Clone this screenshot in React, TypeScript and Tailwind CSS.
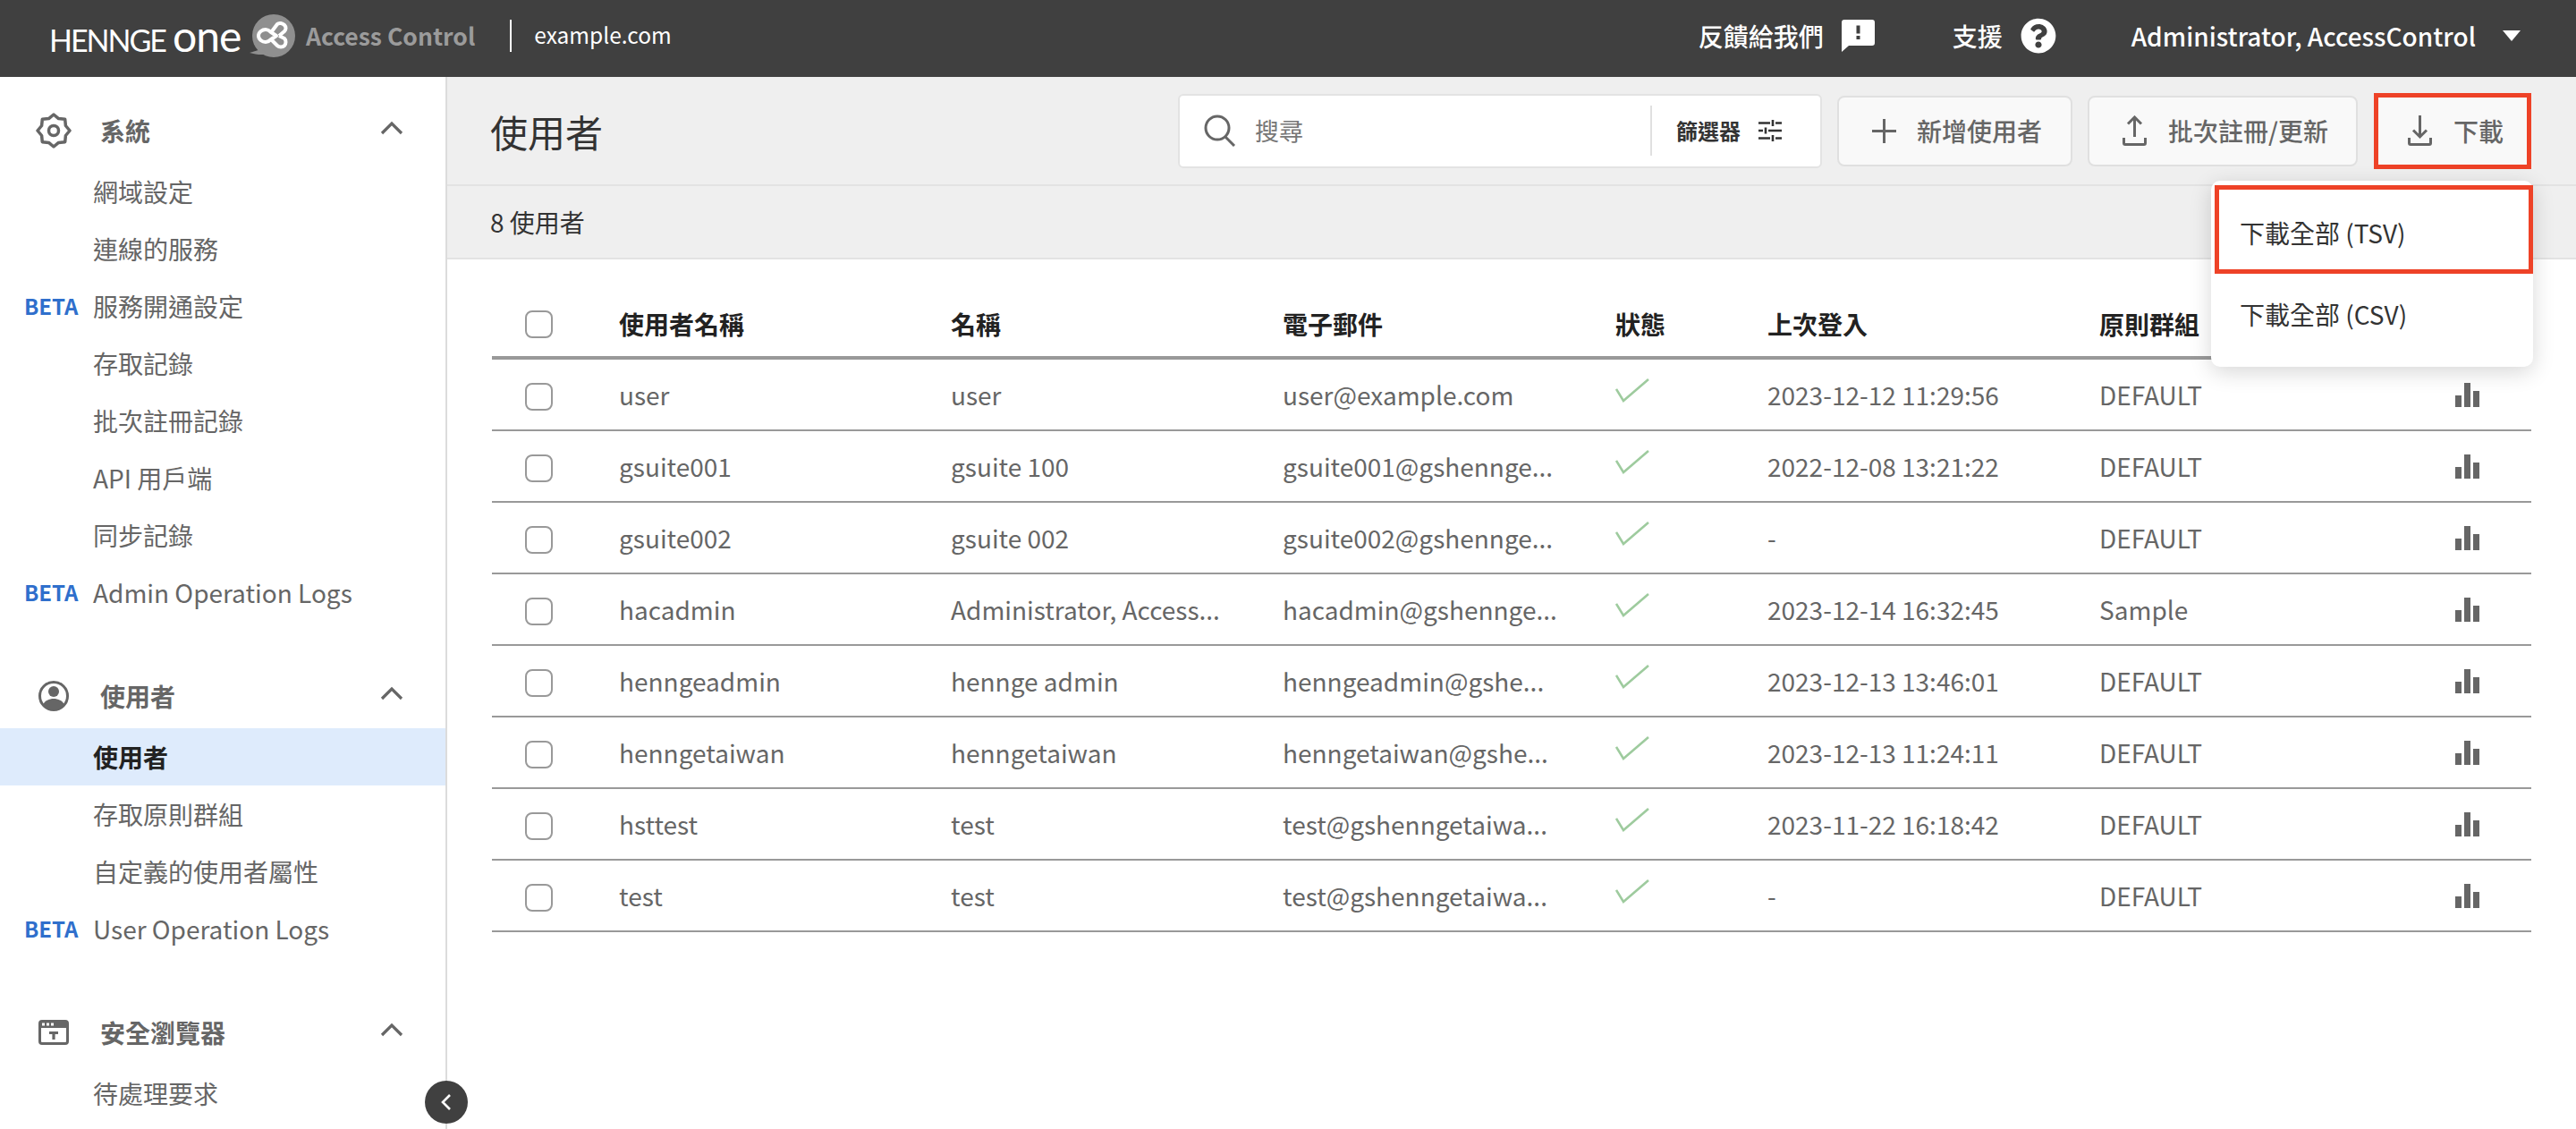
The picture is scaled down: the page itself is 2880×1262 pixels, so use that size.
import { FaQuestionCircle } from "react-icons/fa";

type NavSection = {
  title: string;
  icon: "gear" | "user" | "browser";
  items: { label: string; beta?: boolean; active?: boolean }[];
};

const sections: NavSection[] = [
  {
    title: "系統",
    icon: "gear",
    items: [
      { label: "網域設定" },
      { label: "連線的服務" },
      { label: "服務開通設定", beta: true },
      { label: "存取記錄" },
      { label: "批次註冊記錄" },
      { label: "API 用戶端" },
      { label: "同步記錄" },
      { label: "Admin Operation Logs", beta: true },
    ],
  },
  {
    title: "使用者",
    icon: "user",
    items: [
      { label: "使用者", active: true },
      { label: "存取原則群組" },
      { label: "自定義的使用者屬性" },
      { label: "User Operation Logs", beta: true },
    ],
  },
  {
    title: "安全瀏覽器",
    icon: "browser",
    items: [{ label: "待處理要求" }],
  },
];

const users = [
  ["user", "user", "user@example.com", "2023-12-12 11:29:56", "DEFAULT"],
  ["gsuite001", "gsuite 100", "gsuite001@gshennge...", "2022-12-08 13:21:22", "DEFAULT"],
  ["gsuite002", "gsuite 002", "gsuite002@gshennge...", "-", "DEFAULT"],
  ["hacadmin", "Administrator, Access...", "hacadmin@gshennge...", "2023-12-14 16:32:45", "Sample"],
  ["henngeadmin", "hennge admin", "henngeadmin@gshe...", "2023-12-13 13:46:01", "DEFAULT"],
  ["henngetaiwan", "henngetaiwan", "henngetaiwan@gshe...", "2023-12-13 11:24:11", "DEFAULT"],
  ["hsttest", "test", "test@gshenngetaiwa...", "2023-11-22 16:18:42", "DEFAULT"],
  ["test", "test", "test@gshenngetaiwa...", "-", "DEFAULT"],
];

const gridCols =
  "grid grid-cols-[142px_371px_371px_372px_170px_371px_398px_85px] items-center";

const SectionIcon = ({ icon }: { icon: NavSection["icon"] }) => {
  if (icon === "gear") {
    return (
      <svg width="40" height="40" viewBox="0 0 40 40" fill="none" stroke="#666" strokeWidth="3.5" strokeLinejoin="round">
        <polygon points="20,2 25.5,6.6 32.7,7.3 33.4,14.5 38,20 33.4,25.5 32.7,32.7 25.5,33.4 20,38 14.5,33.4 7.3,32.7 6.6,25.5 2,20 6.6,14.5 7.3,7.3 14.5,6.6" />
        <circle cx="20" cy="20" r="5.5" />
      </svg>
    );
  }
  if (icon === "user") {
    return (
      <svg width="40" height="40" viewBox="0 0 40 40">
        <circle cx="20" cy="20" r="15.5" fill="none" stroke="#666" strokeWidth="3" />
        <circle cx="20" cy="15" r="6" fill="#666" />
        <path d="M8 30c2-5 7-7 12-7s10 2 12 7c-3 4-7 6-12 6s-9-2-12-6z" fill="#666" />
      </svg>
    );
  }
  return (
    <svg width="40" height="40" viewBox="0 0 40 40">
      <rect x="4.5" y="7.5" width="31" height="25" rx="2.5" fill="none" stroke="#666" strokeWidth="3" />
      <rect x="4" y="7" width="32" height="8" fill="#666" />
      <rect x="7" y="9.5" width="3" height="3" fill="#fff" />
      <rect x="12" y="9.5" width="3" height="3" fill="#fff" />
      <rect x="17" y="9.5" width="3" height="3" fill="#fff" />
      <path d="M15 19h10v3h-3.4v6h-3.2v-6H15z" fill="#666" />
    </svg>
  );
};

const ChevronUp = () => (
  <svg width="28" height="18" viewBox="0 0 28 18" fill="none" stroke="#666" strokeWidth="3.2">
    <polyline points="3,15 14,4 25,15" />
  </svg>
);

const Logo = () => (
  <div className="flex items-center">
    <span className="ml-[55px] flex w-[223px] items-baseline font-['Lato',sans-serif] text-white">
      <span className="text-[34px] leading-none tracking-[-2px]">HENNGE</span>
      <span className="ml-[8px] text-[48px] leading-none tracking-[-1px]">one</span>
    </span>
    <svg width="54" height="52" viewBox="0 0 54 52" className="mt-[2px]">
      <circle cx="28" cy="25" r="24" fill="#8f8f8f" />
      <path d="M14 40 L1 44 C8 46 16 47 22 45z" fill="#8f8f8f" />
      <g fill="none" stroke="#fff" strokeWidth="4" strokeLinejoin="round">
        <path d="M19 18c-4 0-8 3-8 7s4 7 8 7c3 0 4-1 6-3l6-4-6-4c-2-2-3-3-6-3z" />
        <path d="M26 20l6-8c2-2 6-1 8 1s2 5 0 7l-6 5" />
        <path d="M26 30l6 6c2 2 6 2 8 0s2-6 0-8l-6-3" />
      </g>
    </svg>
    <span className="ml-[10px] text-[26.5px] font-bold text-[#9b9b9b]">Access Control</span>
    <span className="ml-[39px] h-[36px] w-[2px] bg-white" />
    <span className="ml-[25px] text-[24.5px] text-white">example.com</span>
  </div>
);

const Header = () => (
  <header className="flex h-[86px] items-center justify-between bg-[#404040] pb-[7px]">
    <Logo />
    <div className="flex items-center text-[28px] font-medium text-white">
      <span>反饋給我們</span>
      <svg width="37" height="37" viewBox="0 0 37 37" className="ml-[20px] mt-[1px]">
        <path d="M3 0h31a3 3 0 0 1 3 3v23a3 3 0 0 1-3 3H8l-8 7V3a3 3 0 0 1 3-3z" fill="#fff" />
        <rect x="16.5" y="6.5" width="4" height="9" fill="#404040" />
        <rect x="16.5" y="18" width="4" height="4" fill="#404040" />
      </svg>
      <span className="ml-[87px]">支援</span>
      <FaQuestionCircle className="ml-[20px] text-[40px] text-white" />
      <span className="ml-[84px]">Administrator, AccessControl</span>
      <svg width="20" height="12" viewBox="0 0 20 12" className="ml-[30px] mr-[62px]">
        <polygon points="0,0 20,0 10,12" fill="#fff" />
      </svg>
    </div>
  </header>
);

const Sidebar = () => (
  <aside className="relative w-[500px] shrink-0 border-r-2 border-[#dcdcdc] bg-white pt-[28px]">
    {sections.map((section, index) => (
      <div key={section.title} className={index > 0 ? "mt-[52px]" : ""}>
        <div className="mb-[4px] flex h-[64px] items-center pl-[40px] pr-[46px]">
          <SectionIcon icon={section.icon} />
          <span className="ml-[32px] text-[28px] font-bold text-[#666]">{section.title}</span>
          <span className="mb-[6px] ml-auto flex">
            <ChevronUp />
          </span>
        </div>
        {section.items.map((item) => (
          <div
            key={item.label}
            className={`relative flex h-[64px] items-center pl-[104px] text-[28px] ${
              item.active ? "bg-[#deebfc] font-bold text-[#222]" : "text-[#666]"
            }`}
          >
            {item.beta && (
              <span className="absolute left-[27px] text-[24px] font-bold text-[#2f6fcc]">BETA</span>
            )}
            {item.label}
          </div>
        ))}
      </div>
    ))}
    <button className="absolute right-[-25px] top-[1122px] flex h-[48px] w-[48px] items-center justify-center rounded-full bg-[#404040]">
      <svg width="14" height="22" viewBox="0 0 14 22" fill="none" stroke="#fff" strokeWidth="2.6">
        <polyline points="11,3 3,11 11,19" />
      </svg>
    </button>
  </aside>
);

const Toolbar = () => (
  <div className="flex h-[122px] items-center border-b-2 border-[#e3e3e3] pl-[48px] pr-[50px]">
    <h1 className="text-[42px] font-normal text-[#333]">使用者</h1>
    <div className="ml-auto flex h-[83px] w-[720px] items-center rounded-[6px] border-2 border-[#e3e3e3] bg-white">
      <svg width="36" height="36" viewBox="0 0 36 36" fill="none" stroke="#666" strokeWidth="3" className="ml-[27px]">
        <circle cx="15" cy="15" r="13" />
        <line x1="24" y1="25" x2="34" y2="35" />
      </svg>
      <span className="ml-[21px] text-[27px] text-[#777]">搜尋</span>
      <span className="ml-[388px] h-[56px] w-[2px] bg-[#e0e0e0]" />
      <span className="ml-[27px] text-[24px] font-bold text-[#333]">篩選器</span>
      <svg width="26" height="24" viewBox="0 0 26 24" stroke="#333" strokeWidth="2.6" className="ml-[20px]">
        <path d="M0 3.5h13M19 3.5h7M16 0v7M0 12h5M11 12h15M8 8.5v7M0 20.5h13M19 20.5h7M16 17v7" />
      </svg>
    </div>
    <button className="ml-[17px] flex h-[79px] w-[263px] items-center rounded-[8px] border-2 border-[#e0e0e0] bg-[#f9f9f9] pl-[37px] text-[28px] font-medium text-[#666]">
      <svg width="27" height="27" viewBox="0 0 27 27" stroke="#666" strokeWidth="3">
        <path d="M13.5 0v27M0 13.5h27" />
      </svg>
      <span className="ml-[23px]">新增使用者</span>
    </button>
    <button className="ml-[17px] flex h-[79px] w-[302px] items-center rounded-[8px] border-2 border-[#e0e0e0] bg-[#f9f9f9] pl-[37px] text-[28px] font-medium text-[#666]">
      <svg width="27" height="34" viewBox="0 0 27 34" fill="none" stroke="#666" strokeWidth="3">
        <path d="M13.5 2v22M6 9.5l7.5-7.5L21 9.5M1.5 25v6a1.5 1.5 0 0 0 1.5 1.5h21a1.5 1.5 0 0 0 1.5-1.5v-6" />
      </svg>
      <span className="ml-[24px]">批次註冊/更新</span>
    </button>
    <button className="ml-[18px] flex h-[85px] w-[176px] items-center border-[5px] border-[#ee4227] bg-[#f9f9f9] pl-[33px] text-[28px] font-medium text-[#666]">
      <svg width="27" height="34" viewBox="0 0 27 34" fill="none" stroke="#666" strokeWidth="3">
        <path d="M13.5 0v24M6 16.5l7.5 7.5 7.5-7.5M1.5 25v6a1.5 1.5 0 0 0 1.5 1.5h21a1.5 1.5 0 0 0 1.5-1.5v-6" />
      </svg>
      <span className="ml-[24px]">下載</span>
    </button>
  </div>
);

const UserRow = ({ user }: { user: string[] }) => (
  <div className={`${gridCols} h-[80px] border-b-2 border-[#999] text-[28px] text-[#666]`}>
    <span className="ml-[37px] mt-[5px] block h-[31px] w-[31px] rounded-[8px] border-2 border-[#999] bg-white" />
    <span>{user[0]}</span>
    <span>{user[1]}</span>
    <span>{user[2]}</span>
    <svg width="38" height="28" viewBox="0 0 38 28" fill="none" stroke="#9ecb9e" strokeWidth="2.6" className="mb-[10px]">
      <polyline points="1,13 9,26 37,2" />
    </svg>
    <span>{user[3]}</span>
    <span>{user[4]}</span>
    <svg width="27" height="27" viewBox="0 0 27 27" fill="#666">
      <rect x="0" y="14" width="7" height="13" />
      <rect x="10" y="0" width="7" height="27" />
      <rect x="20" y="9" width="7" height="18" />
    </svg>
  </div>
);

const UserTable = () => (
  <div className="px-[50px] pt-[40px]">
    <div className={`${gridCols} h-[72px] border-b-4 border-[#999] pb-[4px] text-[28px] font-bold text-[#222]`}>
      <span className="ml-[37px] block h-[31px] w-[31px] rounded-[8px] border-2 border-[#999] bg-white" />
      <span>使用者名稱</span>
      <span>名稱</span>
      <span>電子郵件</span>
      <span>狀態</span>
      <span>上次登入</span>
      <span>原則群組</span>
      <span />
    </div>
    {users.map((user) => (
      <UserRow key={user[0]} user={user} />
    ))}
  </div>
);

const DownloadMenu = () => (
  <div className="absolute right-[48px] top-[116px] z-10 h-[208px] w-[360px] rounded-[10px] bg-white pl-[4px] pt-[5px] text-[28px] text-[#333] shadow-[0_6px_24px_rgba(0,0,0,0.16)]">
    <div className="flex h-[99px] items-center border-[5px] border-[#ee4227] pl-[23px] pt-[7px]">下載全部 (TSV)</div>
    <div className="flex h-[90px] items-center pl-[28px]">下載全部 (CSV)</div>
  </div>
);

export default function App() {
  return (
    <div className="h-screen overflow-hidden bg-white font-['Noto_Sans_CJK_TC','Noto_Sans',sans-serif]">
      <Header />
      <div className="flex h-[1176px]">
        <Sidebar />
        <main className="relative flex-1">
          <div className="bg-[#efefef]">
            <Toolbar />
            <div className="flex h-[82px] items-center border-b-2 border-[#e3e3e3] pl-[48px] text-[28px] text-[#333]">
              8 使用者
            </div>
          </div>
          <UserTable />
          <DownloadMenu />
        </main>
      </div>
    </div>
  );
}
